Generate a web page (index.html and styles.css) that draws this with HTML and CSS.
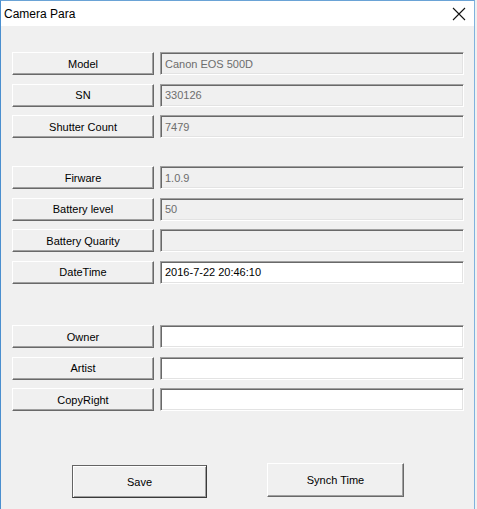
FILE: index.html
```html
<!DOCTYPE html>
<html>
<head>
<meta charset="utf-8">
<link rel="stylesheet" href="styles.css">
</head>
<body>
<div class="window">
  <div class="titlebar">
    <span class="title">Camera Para</span>
    <svg class="close" width="14" height="14" viewBox="0 0 14 14"><path d="M1 1 L13 13 M13 1 L1 13" stroke="#111" stroke-width="1.1" fill="none"/></svg>
  </div>
  <div class="content">
    <div class="group g1">
      <div class="row"><div class="btn label">Model</div><div class="field ro">Canon EOS 500D</div></div>
      <div class="row"><div class="btn label">SN</div><div class="field ro">330126</div></div>
      <div class="row"><div class="btn label">Shutter Count</div><div class="field ro">7479</div></div>
    </div>
    <div class="group g2">
      <div class="row"><div class="btn label">Firware</div><div class="field ro">1.0.9</div></div>
      <div class="row"><div class="btn label">Battery level</div><div class="field ro">50</div></div>
      <div class="row"><div class="btn label">Battery Quarity</div><div class="field ro"></div></div>
      <div class="row"><div class="btn label">DateTime</div><div class="field">2016-7-22 20:46:10</div></div>
    </div>
    <div class="group g3">
      <div class="row"><div class="btn label">Owner</div><div class="field"></div></div>
      <div class="row"><div class="btn label">Artist</div><div class="field"></div></div>
      <div class="row"><div class="btn label">CopyRight</div><div class="field"></div></div>
    </div>
    <div class="actions">
      <div class="btn big default">Save</div>
      <div class="btn big synch">Synch Time</div>
    </div>
  </div>
</div>
</body>
</html>
```
FILE: styles.css
```css
html, body {
  margin: 0;
  padding: 0;
  background: #f0f0f0;
}
body {
  width: 477px;
  height: 509px;
  overflow: hidden;
  font-family: "Liberation Sans", Arial, sans-serif;
  font-size: 11px;
  color: #000;
}
.window {
  width: 475px;
  height: 509px;
  border-left: 1px solid #4a8fcf;
  border-right: 1px solid #7fb2de;
  border-top: 1px solid #6aa3d6;
  box-sizing: border-box;
  background: #f0f0f0;
}
.titlebar {
  height: 25px;
  background: #fff;
  display: flex;
  align-items: center;
  justify-content: space-between;
  padding: 0 8px 0 3px;
}
.title {
  font-size: 12px;
  color: #000;
}
.close {
  display: block;
}
.content {
  padding: 26px 0 0 11px;
  display: flex;
  flex-direction: column;
}
.group {
  display: flex;
  flex-direction: column;
  gap: 8.5px;
}
.g2 { margin-top: 28px; }
.g3 { margin-top: 41.5px; }
.row {
  display: flex;
  gap: 6px;
  height: 23px;
}
.btn {
  box-sizing: border-box;
  background: #f0f0f0;
  border-style: solid;
  border-width: 1px;
  border-color: #fff #696969 #696969 #fff;
  box-shadow: inset -1px -1px #a0a0a0;
  display: flex;
  align-items: center;
  justify-content: center;
  color: #000;
}
.label {
  width: 142px;
  height: 23px;
}
.field {
  box-sizing: border-box;
  width: 304px;
  height: 23px;
  background: #fff;
  border-style: solid;
  border-width: 1px;
  border-color: #a0a0a0 #fff #fff #a0a0a0;
  box-shadow: inset 1px 1px #696969, inset -1px -1px #e3e3e3;
  padding: 0 0 0 4px;
  display: flex;
  align-items: center;
  color: #000;
}
.field.ro {
  background: #f0f0f0;
  color: #6d6d6d;
}
.actions {
  display: flex;
  align-items: flex-start;
  margin-top: 52px;
  padding-left: 60px;
}
.big {
  height: 33px;
}
.default {
  width: 135px;
  margin-top: 2px;
  border-color: #646464 #3a3a3a #3a3a3a #646464;
  box-shadow: inset 1px 1px #fff, inset -1px -1px #a0a0a0;
}
.synch {
  width: 137px;
  height: 34px;
  margin-left: 60px;
}
```
